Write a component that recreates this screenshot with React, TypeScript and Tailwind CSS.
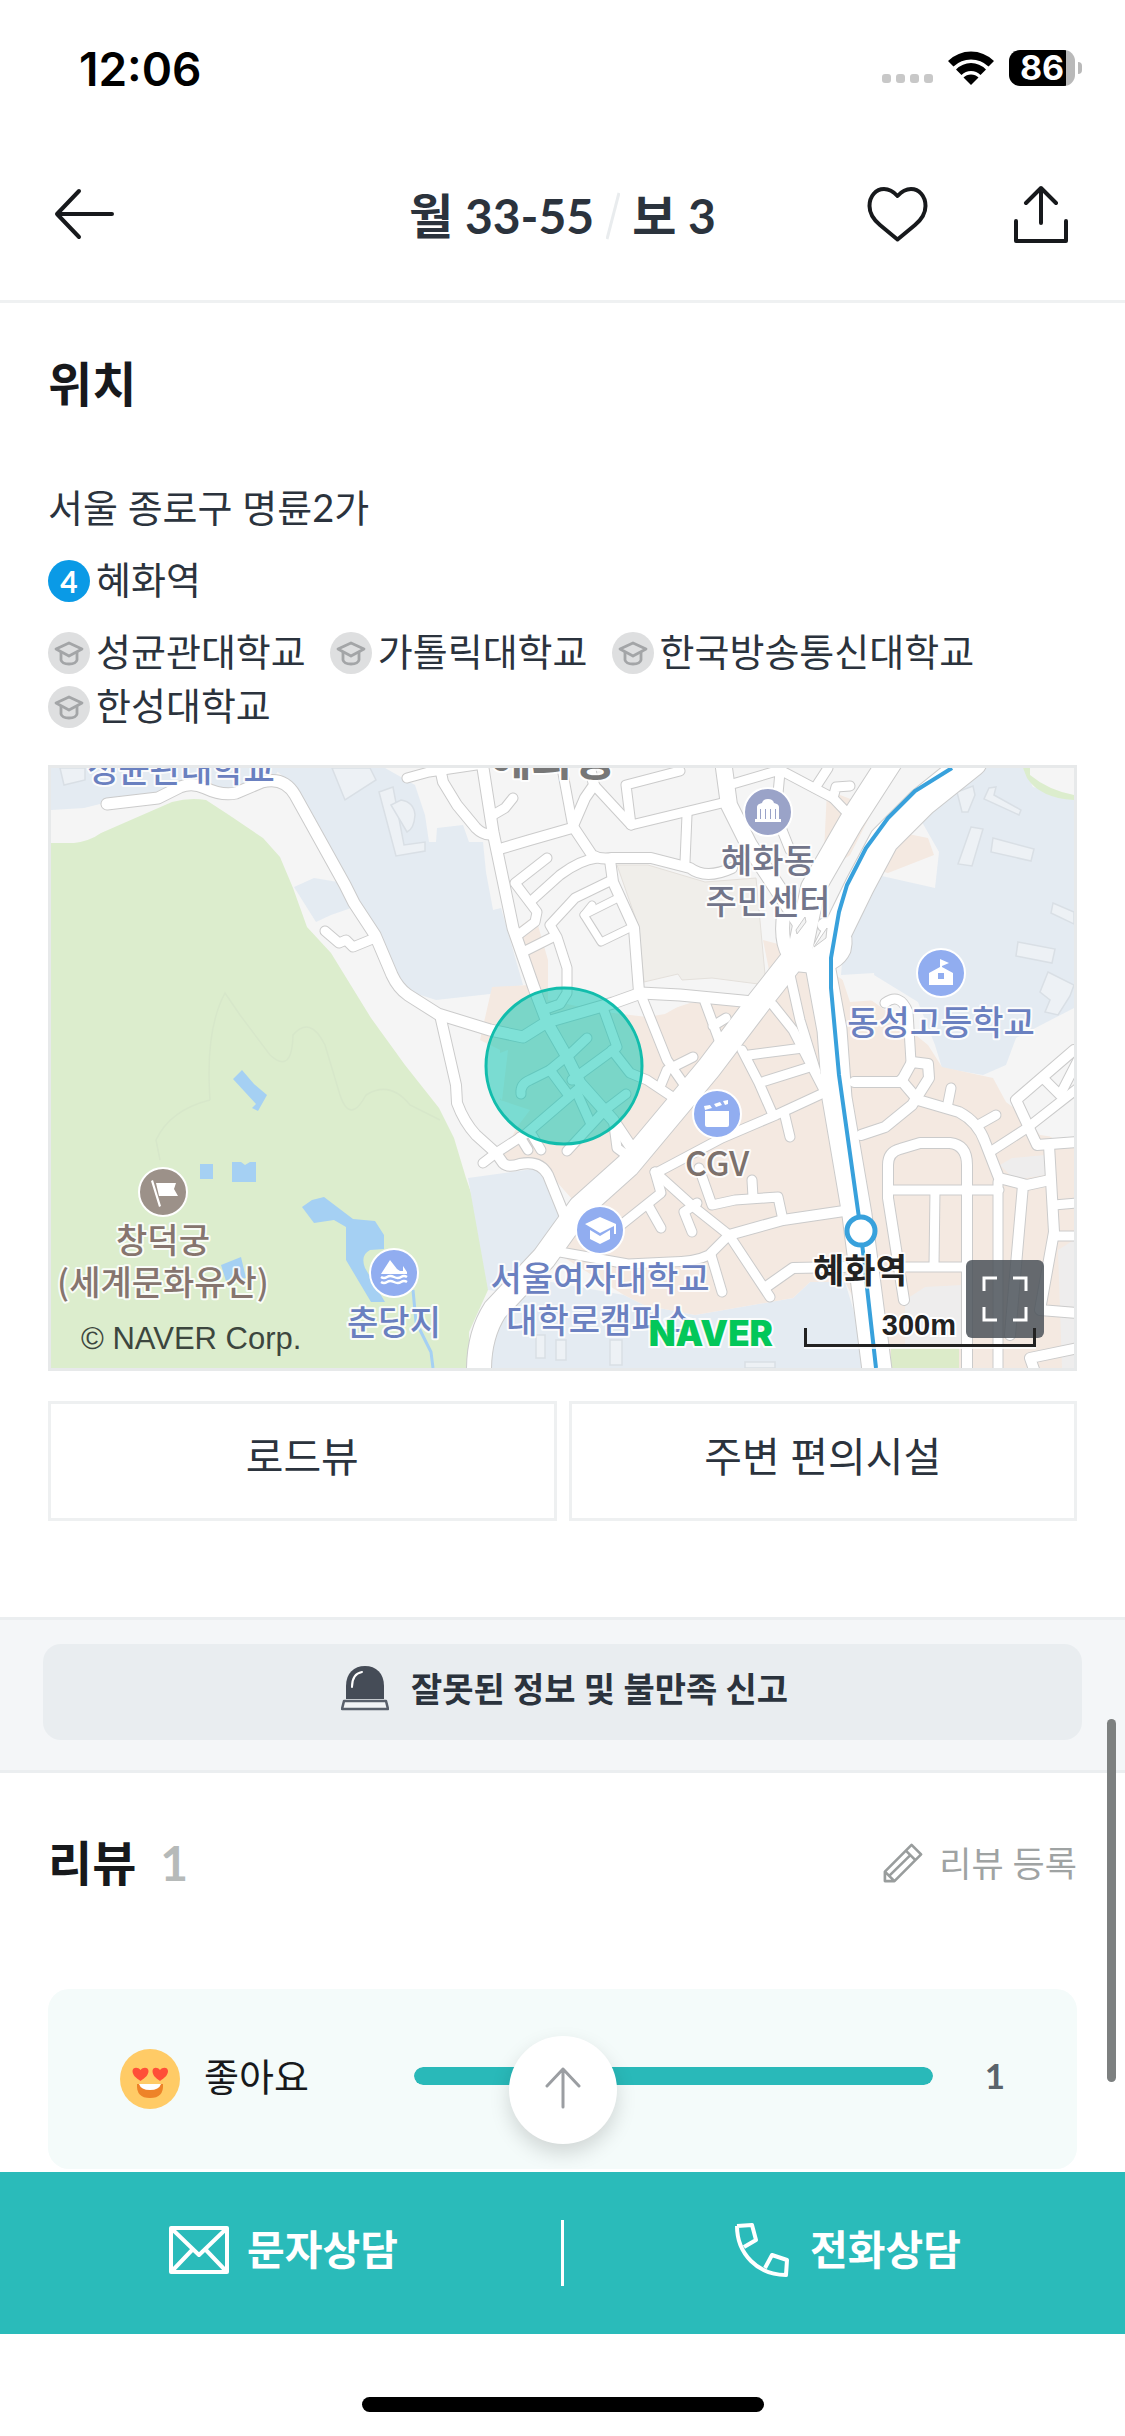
type Road = { d: string; w?: number };
type Pin = { x: number; y: number; color: string; kind: string };
type Label = { x: number; y: number; text: string; color: string; weight?: number; size?: number };

// 지도 도로 (w 생략 시 골목길 폭)
const roads: Road[] = [
  { d: "M107 804L158 798L180 787Q192 782 205 788Q222 796 236 793L262 782Q284 776 295 795L345 885L354 903L375 935L392 975Q398 988 408 995L438 1014L490 1030L523 1037L547 1022L613 1003L641 993L680 995L753 1002", w: 11 },
  { d: "M325 931L339 943L346 940L353 947L375 938" },
  { d: "M440 1015L456 1085L457 1103Q464 1122 476 1135L496 1153L503 1163Q508 1168 520 1164Q540 1160 548 1175L567 1222", w: 10 },
  { d: "M483 1163L496 1153L527 1133L577 1090" },
  { d: "M440 768L443 782L457 805L476 828Q484 836 493 834", w: 10 },
  { d: "M407 778L429 772L483 764" },
  { d: "M483 768L493 832L513 928L534 988L547 1022L567 1057L580 1083L613 1120L633 1150", w: 11 },
  { d: "M513 798L505 808L493 815" },
  { d: "M562 768L572 822" },
  { d: "M503 848L530 840L572 828L585 798L594 785L590 768", w: 10 },
  { d: "M594 785L631 825L722 803" },
  { d: "M631 825L626 785L680 771" },
  { d: "M574 828L592 855Q600 860 612 858L651 858L690 868Q706 880 732 868", w: 10 },
  { d: "M597 858Q580 860 560 875L530 902" },
  { d: "M687 815L685 862" },
  { d: "M610 860L613 882L634 928L639 992", w: 10 },
  { d: "M612 880L575 898L550 925L557 937L567 968L567 993L560 1004L543 1010" },
  { d: "M547 858L515 883L537 912L535 922L518 935" },
  { d: "M523 952L553 937" },
  { d: "M592 905L584 915L601 942L630 928", w: 7 },
  { d: "M584 915L620 897", w: 7 },
  { d: "M641 995L667 1060L690 1093" },
  { d: "M693 1057L667 1070L660 1087" },
  { d: "M891 760L851 822L813 888L800 950L759 1002L709 1068L628 1165L580 1208L544 1258L495 1310Q479 1335 479 1370", w: 24 },
  { d: "M972 762L922 802L884 840L860 885L838 930L820 965L832 1030L837 1098L857 1215L877 1370", w: 29 },
  { d: "M824 925Q850 925 844 950Q835 970 800 965Q780 955 783 920", w: 13 },
  { d: "M724 768L729 805L749 845L780 892L800 922", w: 16 },
  { d: "M729 785L780 770L833 798L854 820" },
  { d: "M780 772L776 815L790 850" },
  { d: "M815 788L828 768" },
  { d: "M833 798L836 787L850 786" },
  { d: "M705 1002L722 1048M713 1026L726 1018" },
  { d: "M773 1005L793 1030L824 1090" },
  { d: "M790 975L800 1020L816 1072" },
  { d: "M749 1055L803 1048" },
  { d: "M742 1050L759 1083L773 1115M759 1083L813 1066" },
  { d: "M830 1090L776 1115L722 1138L658 1172" },
  { d: "M784 1112L790 1137" },
  { d: "M655 1172L695 1208L729 1235L770 1297" },
  { d: "M729 1235L783 1220L844 1211", w: 10 },
  { d: "M699 1168L712 1205L735 1200L778 1197L783 1220" },
  { d: "M752 1180L753 1197" },
  { d: "M655 1172L661 1193L621 1225" },
  { d: "M648 1205L661 1228" },
  { d: "M697 1203L684 1212L692 1232" },
  { d: "M729 1235L709 1255Q695 1262 670 1262L628 1264L560 1252" },
  { d: "M711 1255L722 1292" },
  { d: "M766 1287L793 1268L844 1267", w: 10 },
  { d: "M614 1125L617 1148L633 1160" },
  { d: "M854 1082L901 1082L912 1062L928 1064L929 1078L912 1105L885 1127L861 1135", w: 10 },
  { d: "M885 1003Q900 992 908 1012L911 1062" },
  { d: "M901 1080L918 1100L959 1112Q978 1122 985 1142L999 1178L1027 1185L1050 1180", w: 10 },
  { d: "M951 1088L947 1108M980 1124L996 1115" },
  { d: "M993 1150L1027 1128L1078 1088" },
  { d: "M1074 1050L1016 1100L1037 1145L1078 1142", w: 10 },
  { d: "M1049 1145L1054 1232L1040 1310L1078 1313", w: 10 },
  { d: "M1023 1185L1016 1265L1010 1335", w: 10 },
  { d: "M904 1300L888 1198L888 1165Q888 1152 900 1149L920 1143L950 1143Q967 1145 967 1165L967 1370", w: 10 },
  { d: "M891 1190L999 1190M935 1190L934 1265M905 1267L966 1267M998 1182L998 1370" },
  { d: "M1054 1205L1078 1203M1054 1236L1078 1236" },
  { d: "M1078 1348L1030 1358L1036 1375", w: 10 },
  { d: "M1045 1080L1060 1095L1078 1060" },
  { d: "M567 1057L587 1038" },
  { d: "M521 1094Q520 1084 530 1080L550 1070L562 1060" },
  { d: "M550 1070L567 1093" },
  { d: "M572 1080L617 1047L603 1008" },
  { d: "M612 1050L630 1073L647 1080L677 1100" },
  { d: "M626 1094L605 1110L567 1151" },
  { d: "M577 1093L590 1122" },
  { d: "M520 1137L528 1150M532 1135L541 1150" },
];

const pins: Pin[] = [
  { x: 768, y: 812, color: "#9aa3c8", kind: "office" },
  { x: 941, y: 973, color: "#91adf0", kind: "school" },
  { x: 163, y: 1192, color: "#9c9189", kind: "flag" },
  { x: 394, y: 1273, color: "#91adf0", kind: "lake" },
  { x: 717, y: 1114, color: "#91adf0", kind: "movie" },
  { x: 600, y: 1230, color: "#91adf0", kind: "college" },
];

const labels: Label[] = [
  { x: 181, y: 782, text: "성균관대학교", color: "#6a80c0" },
  { x: 553, y: 775, text: "혜화동", color: "#777777", size: 46, weight: 700 },
  { x: 768, y: 873, text: "혜화동", color: "#72758a" },
  { x: 768, y: 914, text: "주민센터", color: "#72758a" },
  { x: 941, y: 1035, text: "동성고등학교", color: "#6a80c0" },
  { x: 163, y: 1253, text: "창덕궁", color: "#86756f" },
  { x: 163, y: 1295, text: "(세계문화유산)", color: "#86756f" },
  { x: 394, y: 1335, text: "춘당지", color: "#6a80c0" },
  { x: 600, y: 1291, text: "서울여자대학교", color: "#6a80c0" },
  { x: 600, y: 1333, text: "대학로캠퍼스", color: "#6a80c0" },
  { x: 717, y: 1176, text: "CGV", color: "#7c716c" },
  { x: 860, y: 1283, text: "혜화역", color: "#222222", weight: 700 },
];

const schools = ["성균관대학교", "가톨릭대학교", "한국방송통신대학교", "한성대학교"];

function PinGlyph({ kind }: { kind: string }) {
  switch (kind) {
    case "office":
      return (
        <path
          d="M-11 -5Q-11 -8 -6 -9Q-5 -13 0 -13Q5 -13 6 -9Q11 -8 11 -5V7H13V10H-13V7H-11ZM-8 -3V7H-7V-3ZM-3 -3V7H-2V-3ZM2 -3V7H3V-3ZM7 -3V7H8V-3Z"
          fillRule="evenodd"
        />
      );
    case "school":
      return (
        <path d="M-1 -14L8 -10L1 -7V-6L12 0V12H-12V0L-1 -6ZM-3 0V6H3V0Z" fillRule="evenodd" />
      );
    case "flag":
      return <path d="M-12 -11L-10 -12L-2 14L-4 15ZM-7 -9H13L11 -3L15 4H-4Z" />;
    case "lake":
      return (
        <>
          <path d="M-13 1L-4 -13L3 -4L6 -2L9 -2L9 -7L13 -1V1Z" />
          <path
            d="M-13 4Q-10 6 -7 4T0 4T7 4T13 4M-13 9Q-10 11 -7 9T0 9T7 9T13 9"
            fill="none"
            stroke="#fff"
            strokeWidth="2.5"
          />
        </>
      );
    case "movie":
      return (
        <path d="M-12 -3H12V11Q12 13 10 13H-10Q-12 13 -12 11ZM-13 -8L-7 -9L-5 -6L-12 -4ZM-3 -10L3 -12L5 -9L-1 -7ZM6 -13L11 -14V-10L8 -9Z" />
      );
    default:
      return (
        <path d="M0 -13L16 -6V4H14V-4L0 3L-15 -6ZM-10 0L0 6L10 0V9L0 14L-10 9Z" />
      );
  }
}

function MapDrawing() {
  return (
    <svg viewBox="51 768 1023 600" className="block w-full" role="img" aria-label="지도">
      <rect x="51" y="768" width="1023" height="600" fill="#f5f5f5" />
      {/* 녹지 */}
      <path
        fill="#dcedcd"
        d="M51 843H74Q90 841 101 833L172 802Q190 797 206 800L229 815L263 838L280 857L293 888L307 927L331 953L371 1018L405 1065L439 1108L454 1138L466 1178L481 1222Q492 1260 488 1290L469 1332V1368H51Z"
      />
      <path
        d="M210 1100Q205 1030 225 993L240 1015L270 1055Q292 1075 293 1035Q310 1015 325 1045L340 1095Q350 1125 366 1095Q390 1080 410 1105L440 1120M210 1100Q170 1110 156 1140L160 1160"
        fill="none"
        stroke="#d7e7ca"
        strokeWidth="1.5"
      />
      {/* 학교 부지 */}
      <g fill="#e4ebf2">
        <path d="M51 768H280L273 779L229 797L192 786L158 798L104 803L84 808L51 810Z" />
        <path d="M273 768H385L415 785L425 815L429 842H436L437 828L463 825L469 842H483L486 872L493 910L501 908L523 985L490 994L436 1000L405 990L375 935L290 782Z" />
        <path d="M294 887L314 878L344 883L354 907L331 915L316 922Z" />
        <path d="M1023 768L1033 787L1074 798V1008L1016 1038L1006 1065L983 1075L942 1068L935 1045L918 1002L874 975H841L847 905L864 872L935 888L939 852L918 815L962 775L975 768Z" />
        <path d="M468 1178L540 1168L562 1225L507 1292L488 1290Z" />
        <path d="M490 1368V1330L540 1280L624 1295L644 1305L695 1315L793 1298L810 1282H845L871 1368Z" />
      </g>
      {/* 상업 지역 */}
      <g fill="#f4e9e1">
        <path d="M492 987L530 985L515 930L535 915L548 960V1000L605 1012L647 1017L690 1003L755 1003L772 985L763 940L800 950L850 985L885 1010L928 1045L942 1067L993 1078L1006 1102L1033 1122L1057 1142H1074V1368H891L845 1282H810L793 1298L695 1315L644 1305L624 1295L560 1255L580 1208L540 1163L500 1160L517 1127L530 1110L500 1100V1050L480 1040Z" />
        <path d="M827 790L874 808L850 855L815 880L824 852Z" />
        <path d="M868 868L898 832L928 838L934 855L888 873Z" />
      </g>
      <path d="M500 1053L508 1050L502 1100L490 1090Z" fill="#f5f5f5" />
      <path d="M607 1008L690 1000L665 1014L647 1017Z" fill="#f5f5f5" />
      <path d="M841 975L874 973L877 1000L850 1002Z" fill="#f5f5f5" />
      <path
        d="M617 865H648L705 882L756 878L766 985L712 978L682 980L678 974L644 982L639 928Z"
        fill="#f0eeea"
        stroke="#e4e0db"
      />
      <path d="M1023 768H1040L1038 778Q1050 790 1074 792V800Q1040 798 1027 778Z" fill="#dcedcd" />
      <path d="M1030 768H1074V795Q1048 790 1030 775Z" fill="#f5f5f5" />
      <path d="M891 1348H959V1368H891Z" fill="#dcebc9" />
      <path d="M1000 1165L1012 1158L1045 1155V1175L1015 1180ZM905 1300L925 1287L962 1285V1347H905ZM1058 1250L1074 1240V1368H1062Z" fill="#eeeded" />
      <path d="M1020 1110L1074 1065V1140L1040 1135Z" fill="#f5f5f5" />
      {/* 건물 */}
      <g fill="#edf1f5" stroke="#d9dfe5" strokeWidth="1.5">
        <path d="M332 768L345 800L376 780L370 768ZM60 768L64 785L85 780V768Z" />
        <path d="M379 792L393 787L404 845L425 842V851L396 856Z" />
        <path d="M391 805L401 800Q414 802 415 815Q414 829 407 832Z" />
        <path d="M957 792L973 786L975 795L968 812H962ZM989 788L996 787L994 795L1021 810L1019 815L984 799ZM971 827L983 829L972 866L958 864ZM993 838L1034 849L1031 861L991 852ZM1018 942L1055 949L1052 963L1016 956ZM1053 903L1074 912V924L1051 913Z" />
        <path d="M1048 972L1074 985L1070 996L1058 1015L1045 1012L1050 1000L1040 992Z" />
        <path d="M536 1335H545V1358H536ZM556 1340H566V1360H556ZM610 1340H622V1365H610ZM745 1362H775V1368H745Z" />
      </g>
      {/* 연못 */}
      <g fill="#a5d0f3">
        <path d="M242 1070L233 1079L256 1104L252 1108L258 1111L267 1095L254 1084Z" />
        <path d="M200 1164H213V1179H200ZM232 1162H241L245 1165L250 1162H256V1182H232Z" />
        <path d="M302 1207L312 1200L324 1197L353 1219L375 1221L384 1235V1249L370 1250Q360 1255 365 1268L385 1302H371L346 1260V1227L334 1220L314 1223Z" />
        <path d="M221 1265L241 1257L246 1278L226 1281Z" />
      </g>
      <path d="M413 1290L416 1322L431 1352L433 1368" fill="none" stroke="#a5d0f3" strokeWidth="3" />

      {/* 도로 테두리 -> 도로 면 순서로 그려야 교차로가 이어진다 */}
      <g fill="none" stroke="#cbcbcb" strokeLinecap="round" strokeLinejoin="round">
        {roads.map((road) => (
          <path key={road.d} d={road.d} strokeWidth={(road.w ?? 9) + 2} />
        ))}
      </g>
      <g fill="none" stroke="#ffffff" strokeLinecap="round" strokeLinejoin="round">
        {roads.map((road) => (
          <path key={road.d} d={road.d} strokeWidth={road.w ?? 9} />
        ))}
      </g>
      <path
        d="M796 930L805 917L806 922L797 934ZM814 947L827 928L826 938Z"
        fill="#f4f4f4"
        stroke="#cbcbcb"
      />

      {/* 4호선 */}
      <path
        d="M952 768L915 791L888 818L866 848L847 885L839 912L831 958V988L839 1075L860 1225L876 1368"
        fill="none"
        stroke="#38a1dc"
        strokeWidth="4"
      />
      <circle cx="861" cy="1231" r="14" fill="#fff" stroke="#38a1dc" strokeWidth="5" />

      {pins.map((pin) => (
        <g key={pin.kind} transform={`translate(${pin.x} ${pin.y})`} fill="#fff">
          <circle r="24" fill={pin.color} stroke="#fff" strokeWidth="2" />
          <PinGlyph kind={pin.kind} />
        </g>
      ))}
      {labels.map((label) => (
        <text
          key={label.text + label.y}
          x={label.x}
          y={label.y}
          textAnchor="middle"
          fontSize={label.size ?? 34}
          fontWeight={label.weight ?? 500}
          fill={label.color}
          stroke="#ffffff"
          strokeWidth="4"
          strokeOpacity="0.85"
          strokeLinejoin="round"
          paintOrder="stroke"
          className="font-['Noto_Sans_CJK_KR',sans-serif]"
        >
          {label.text}
        </text>
      ))}

      <circle cx="564" cy="1066" r="78" fill="#00c4b0" fillOpacity="0.5" stroke="#12bdac" strokeWidth="3" />
    </svg>
  );
}

function CapIcon() {
  return (
    <svg viewBox="0 0 42 42" className="mt-1 size-[42px] shrink-0" aria-hidden="true">
      <circle cx="21" cy="21" r="21" fill="#dedfe0" />
      <g fill="none" stroke="#a3a5a7" strokeWidth="2.8" strokeLinejoin="round">
        <path d="M8 17L21 11L34 17L21 24Z" />
        <path d="M13 20V28Q14 32 21 32Q28 32 29 28V20" />
      </g>
    </svg>
  );
}

function StatusBar() {
  return (
    <div className="flex h-[132px] items-start justify-between pt-[42px] pr-[43px] pl-[79px]">
      <span className="font-['Inter',sans-serif] text-[46px] leading-[54px] font-semibold text-black">12:06</span>
      <div className="flex items-center gap-[15px] pt-2">
        <div className="flex gap-[5px] pt-5">
          <i className="size-[9px] rounded-[3px] bg-[#c8c8c8]" />
          <i className="size-[9px] rounded-[3px] bg-[#c8c8c8]" />
          <i className="size-[9px] rounded-[3px] bg-[#c8c8c8]" />
          <i className="size-[9px] rounded-[3px] bg-[#c8c8c8]" />
        </div>
        <svg viewBox="0 0 46 34" className="h-[34px] w-[46px]" aria-hidden="true">
          <path d="M0 10Q10 0.500 23 0.500T46 10L40.500 15.500Q33 8.500 23 8.500T5.500 15.500Z" />
          <path d="M8 18.500Q14.500 12 23 12T38 18.500L32.500 24Q28.500 20 23 20T13.500 24Z" />
          <path d="M15.500 26.500Q18.500 23.500 23 23.500T30.500 26.500L23 34Z" />
        </svg>
        <div className="flex items-center gap-[3px]">
          <div className="flex h-9 w-[66px] items-center justify-center rounded-[11px] bg-linear-to-r from-black from-87% to-[#b9b9b9] to-87%">
            <span className="font-['Inter',sans-serif] text-[34px] leading-9 font-bold text-white">86</span>
          </div>
          <i className="h-3 w-1 rounded-r-full bg-[#b9b9b9]" />
        </div>
      </div>
    </div>
  );
}

function Header() {
  return (
    <header className="relative flex h-[171px] items-center justify-between border-b-[3px] border-[#eff1f2] pr-[57px] pb-1 pl-[54px]">
      <button type="button" aria-label="뒤로">
        <svg viewBox="0 0 60 52" className="h-[52px] w-[60px]" fill="none" stroke="#17191c" strokeWidth="4" strokeLinecap="round" strokeLinejoin="round">
          <path d="M58 26H3M25 3L3 26L25 49" />
        </svg>
      </button>
      <h1 className="absolute inset-x-60 flex items-center justify-center pt-1 text-[48px] leading-[60px] font-bold text-[#2b333d]">
        <span>월 33-55</span>
        <svg viewBox="0 0 14 48" className="mx-3 h-12 w-3.5" stroke="#e9ecee" strokeWidth="3" aria-hidden="true">
          <path d="M13 1L1 47" />
        </svg>
        <span>보 3</span>
      </h1>
      <div className="flex items-center gap-[86px]">
        <button type="button" aria-label="찜하기">
          <svg viewBox="0 0 61 56" className="h-14 w-[61px]" fill="none" stroke="#17191c" strokeWidth="4" strokeLinejoin="round">
            <path d="M30.500 10C25 4 21 3 17 3C9 3 2.500 10 2.500 20C2.500 28 7 34 13 39L30.500 53.500L48 39C54 34 58.500 28 58.500 20C58.500 10 52 3 44 3C40 3 36 4 30.500 10Z" />
          </svg>
        </button>
        <button type="button" aria-label="공유">
          <svg viewBox="0 0 54 58" className="h-[58px] w-[54px]" fill="none" stroke="#17191c" strokeWidth="4" strokeLinecap="round" strokeLinejoin="round">
            <path d="M27 38V3M12 18L27 3L42 18M2 36V56H52V36" />
          </svg>
        </button>
      </div>
    </header>
  );
}

function LocationSection() {
  return (
    <section className="px-12 pt-[51px] pb-24 text-[38px] leading-[54px] text-[#2b333d]">
      <h2 className="mb-[66px] text-[48px] leading-[60px] font-bold text-[#17191c]">위치</h2>
      <p>서울 종로구 명륜2가</p>
      <div className="mt-[18px] flex items-center gap-1.5">
        <span className="mt-1 flex size-[42px] items-center justify-center rounded-full bg-[#0a9ae6] text-[30px] leading-[42px] font-bold text-white">4</span>
        <span>혜화역</span>
      </div>
      <ul className="mt-[18px] flex flex-wrap gap-x-6">
        {schools.map((school) => (
          <li key={school} className="flex items-center gap-1.5">
            <CapIcon />
            {school}
          </li>
        ))}
      </ul>

      {/* 지도 */}
      <div className="relative mt-[33px] overflow-hidden border-[3px] border-[#e7e9ea]">
        <MapDrawing />
        <span className="absolute bottom-[11px] left-[30px] font-['Liberation_Sans',sans-serif] text-[31px] leading-[36px] text-[#3c463e]">
          © NAVER Corp.
        </span>
        <span className="absolute right-[301px] bottom-[15px] font-['Inter',sans-serif] text-[35px] leading-[40px] font-black text-[#03c75a] [paint-order:stroke] [-webkit-text-stroke:4px_#ffffffd9]">
          NAVER
        </span>
        <button
          type="button"
          aria-label="지도 크게 보기"
          className="absolute right-[30px] bottom-[30px] flex size-[78px] items-center justify-center rounded-md bg-[#4b5259]/85"
        >
          <svg viewBox="0 0 46 46" className="size-[46px]" fill="none" stroke="#fff" strokeWidth="3">
            <path d="M2 15V2H15M31 2H44V15M44 31V44H31M15 44H2V31" />
          </svg>
        </button>
        <span className="absolute right-[118px] bottom-[26px] font-['Liberation_Sans',sans-serif] text-[29px] leading-[34px] font-bold text-[#222] [paint-order:stroke] [-webkit-text-stroke:4px_#ffffff]">
          300m
        </span>
        <i className="absolute right-[38px] bottom-[21px] h-[19px] w-[232px] border-x-[3px] border-b-[3px] border-[#222] shadow-[0_2px_0_#ffffffcc]" />
      </div>

      <div className="mt-[30px] grid grid-cols-2 gap-3 text-[41px]">
        <button type="button" className="h-[120px] border-[3px] border-[#eef0f1] pb-2">로드뷰</button>
        <button type="button" className="h-[120px] border-[3px] border-[#eef0f1] pb-2">주변 편의시설</button>
      </div>
    </section>
  );
}

function ReportSection() {
  return (
    <section className="border-y-[3px] border-[#ebeef0] bg-[#f4f6f8] px-[43px] pt-6 pb-[30px]">
      <button
        type="button"
        className="flex h-24 w-full items-center justify-center gap-[22px] rounded-[18px] bg-[#e9edf0] pb-2 pl-1 text-[34px] font-bold text-[#2b333d]"
      >
        <svg viewBox="0 0 48 46" className="h-[46px] w-12" aria-hidden="true">
          <path d="M5 34V21C5 8 13 1 24 1S43 8 43 21V34Z" fill="#454c57" />
          <path d="M11 22C11 13 15 8 21 7" fill="none" stroke="#fff" strokeWidth="2" strokeLinecap="round" />
          <path d="M3 36H45L47 44H1Z" fill="#f2f3f4" stroke="#5a606a" strokeWidth="2.5" strokeLinejoin="round" />
        </svg>
        잘못된 정보 및 불만족 신고
      </button>
    </section>
  );
}

function ReviewSection() {
  return (
    <section className="flex-1 px-12 pt-[60px]">
      <div className="flex items-center justify-between">
        <h2 className="text-[48px] leading-[60px] font-bold text-[#17191c]">
          리뷰<span className="ml-6 text-[#b6bab9]">1</span>
        </h2>
        <button type="button" className="flex items-center gap-4 text-[35px] leading-[54px] text-[#9fa3a3]">
          <svg viewBox="0 0 42 42" className="size-10" fill="none" stroke="#999d9d" strokeWidth="2.8" strokeLinejoin="round">
            <path d="M2 40V30L30 2L40 12L12 40ZM2 30L12 40M24 8L34 18M7 34L29 12.500" />
          </svg>
          리뷰 등록
        </button>
      </div>

      <div className="mt-24 flex h-[180px] items-center rounded-[21px] bg-[#f4fbfa] px-[72px]">
        <svg viewBox="0 0 60 60" className="size-[60px] shrink-0" aria-hidden="true">
          <circle cx="30" cy="30" r="30" fill="#ffcb66" />
          <path
            d="M20.500 32C16 29 12.500 26 12.500 22C12.500 18 18 17.500 20.500 21C23 17.500 28.500 18 28.500 22C28.500 26 25 29 20.500 32ZM40 32C35.500 29 32.500 26 32.500 22C32.500 18 37.500 17.500 40 21C42.500 17.500 48 18 48 22C48 26 44.500 29 40 32Z"
            fill="#ff4f38"
          />
          <path d="M17 35H43Q44 49 30 49T17 35Z" fill="#ee8328" />
          <path d="M19 35H41Q39 41 30 41T19 35Z" fill="#fff" />
        </svg>
        <span className="w-[208px] pl-6 pb-1.5 text-[38px] leading-[54px] text-[#17191c]">좋아요</span>
        <div className="mb-1.5 ml-[26px] h-[18px] flex-1 overflow-hidden rounded-full bg-[#e1e6e6]">
          <div className="h-full rounded-full bg-[#29b9b9]" style={{ width: `${(1 / 1) * 100}%` }} />
        </div>
        <span className="w-[72px] pb-2 text-right text-[35px] leading-[54px] font-bold text-[#5a636b]">1</span>
      </div>
    </section>
  );
}

function ContactBar() {
  return (
    <div className="relative mt-[3px] flex h-[162px] items-center bg-[#2abbba] text-[41px] leading-[54px] font-bold text-white">
      <a href="#message" className="flex flex-1 items-center justify-center gap-[18px] pb-1.5 pl-1.5">
        <svg viewBox="0 0 60 48" className="h-12 w-[60px]" fill="none" stroke="#fff" strokeWidth="4" strokeLinejoin="round" aria-hidden="true">
          <path d="M2 2H58V46H2ZM3 3L30 29L57 3M3 45L24 23M57 45L36 23" />
        </svg>
        문자상담
      </a>
      <i className="h-[66px] w-[3px] bg-white" />
      <a href="#call" className="flex flex-1 items-center justify-center gap-5 pb-1.5 pl-1.5">
        <svg viewBox="0 0 56 56" className="size-14" fill="none" stroke="#fff" strokeWidth="4" strokeLinejoin="round" aria-hidden="true">
          <path d="M3 4L18 3L22 18L10 25M3 4C3 32 24 53 52 53L53 38L38 33L31 46" />
        </svg>
        전화상담
      </a>
      <button
        type="button"
        aria-label="맨 위로"
        className="absolute bottom-[190px] left-1/2 flex size-[108px] -translate-x-1/2 items-center justify-center rounded-full bg-white pb-1 shadow-[0_9px_20px_rgba(0,0,0,0.15)]"
      >
        <svg viewBox="0 0 36 42" className="h-[42px] w-9" fill="none" stroke="#9b9ea2" strokeWidth="3" strokeLinecap="round" strokeLinejoin="round">
          <path d="M18 40V2M2 19L18 2L34 19" />
        </svg>
      </button>
    </div>
  );
}

export default function App() {
  return (
    <div className="relative flex min-h-screen flex-col bg-white font-['Lato','Noto_Sans_CJK_KR',sans-serif]">
      <StatusBar />
      <Header />
      <main className="flex flex-1 flex-col">
        <LocationSection />
        <ReportSection />
        <ReviewSection />
      </main>
      <ContactBar />
      <div className="flex h-[102px] justify-center pt-[63px]">
        <i className="h-[15px] w-[402px] rounded-full bg-black" />
      </div>
      {/* 스크롤바 */}
      <i className="absolute right-[9px] bottom-[354px] h-[363px] w-[9px] rounded-full bg-[#7d8080]" />
    </div>
  );
}
